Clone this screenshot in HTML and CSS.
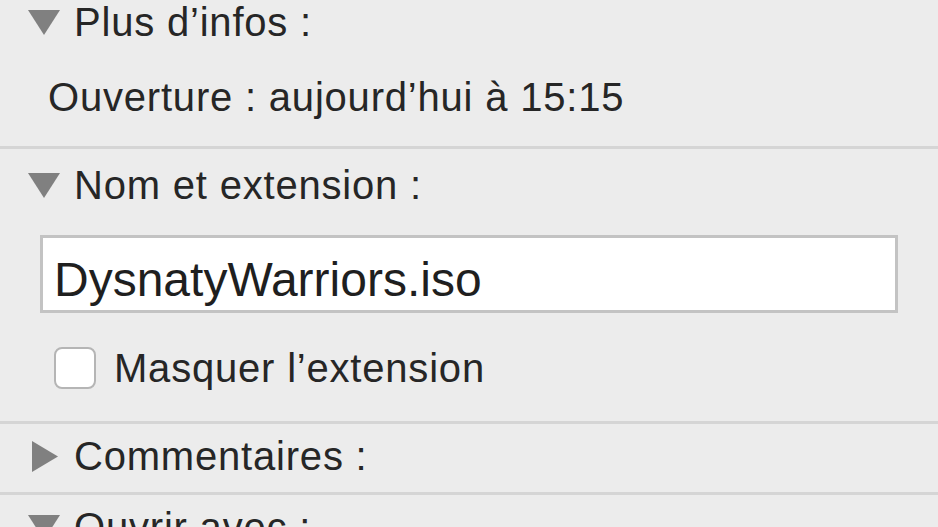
FILE: index.html
```html
<!DOCTYPE html>
<html lang="fr">
<head>
    <meta charset="UTF-8">
    <meta name="viewport" content="width=device-width, initial-scale=1.0">
    <title>Infos</title>
    <link rel="stylesheet" href="styles.css">
</head>
<body>
    <div id="info-panel">
        <div class="section section-first">
            <div class="disclosure">
                <svg class="arrow" width="32" height="25" viewBox="0 0 32 25"><polygon points="0,0 32,0 16,25" /></svg>
                <span>Plus d’infos :</span>
            </div>
            <div class="info-line">Ouverture : aujourd’hui à 15:15</div>
        </div>

        <div class="section section-name">
            <div class="disclosure">
                <svg class="arrow" width="32" height="25" viewBox="0 0 32 25"><polygon points="0,0 32,0 16,25" /></svg>
                <span>Nom et extension :</span>
            </div>
            <div class="name-field">DysnatyWarriors.iso</div>
            <label class="check-row">
                <span class="checkbox"></span>
                <span>Masquer l’extension</span>
            </label>
        </div>

        <div class="section section-closed">
            <div class="disclosure">
                <svg class="arrow arrow-right" width="32" height="31" viewBox="0 0 32 31"><polygon points="4,0 30,15.5 4,31" /></svg>
                <span>Commentaires :</span>
            </div>
        </div>

        <div class="section section-closed">
            <div class="disclosure">
                <svg class="arrow" width="32" height="25" viewBox="0 0 32 25"><polygon points="0,0 32,0 16,25" /></svg>
                <span>Ouvrir avec :</span>
            </div>
        </div>
    </div>
</body>
</html>
```

FILE: styles.css
```css
body {
    margin: 0;
    background-color: #ececec;
    font-family: "Liberation Sans", Arial, sans-serif;
    color: #262626;
    letter-spacing: 0.8px;
    overflow: hidden;
}

#info-panel {
    width: 938px;
}

.section {
    padding: 14px 0 27px 0;
    border-bottom: 3px solid #d5d5d5;
}

.section-first {
    padding-top: 0;
}

.section-name {
    padding-bottom: 31px;
}

.section-closed {
    padding-top: 10px;
    padding-bottom: 14px;
}

.disclosure {
    display: flex;
    align-items: center;
    height: 44px;
    padding-left: 28px;
    font-size: 40px;
    line-height: 44px;
}

.disclosure .arrow {
    fill: #808080;
    margin-right: 14px;
    flex-shrink: 0;
}

.info-line {
    margin-top: 31px;
    padding-left: 48px;
    font-size: 40px;
    line-height: 44px;
}

.name-field {
    margin: 28px 0 0 40px;
    width: 858px;
    height: 78px;
    box-sizing: border-box;
    border: 3px solid #c3c3c3;
    background-color: #fff;
    padding: 12px 0 0 11px;
    font-size: 48px;
    line-height: 60px;
    letter-spacing: 0;
    color: #1f1f1f;
}

.check-row {
    display: flex;
    align-items: center;
    margin: 33px 0 0 54px;
    height: 44px;
    font-size: 40px;
    line-height: 44px;
}

.checkbox {
    width: 42px;
    height: 42px;
    box-sizing: border-box;
    border: 2px solid #b5b5b5;
    border-radius: 8px;
    background-color: #fff;
    margin-right: 18px;
}
```
